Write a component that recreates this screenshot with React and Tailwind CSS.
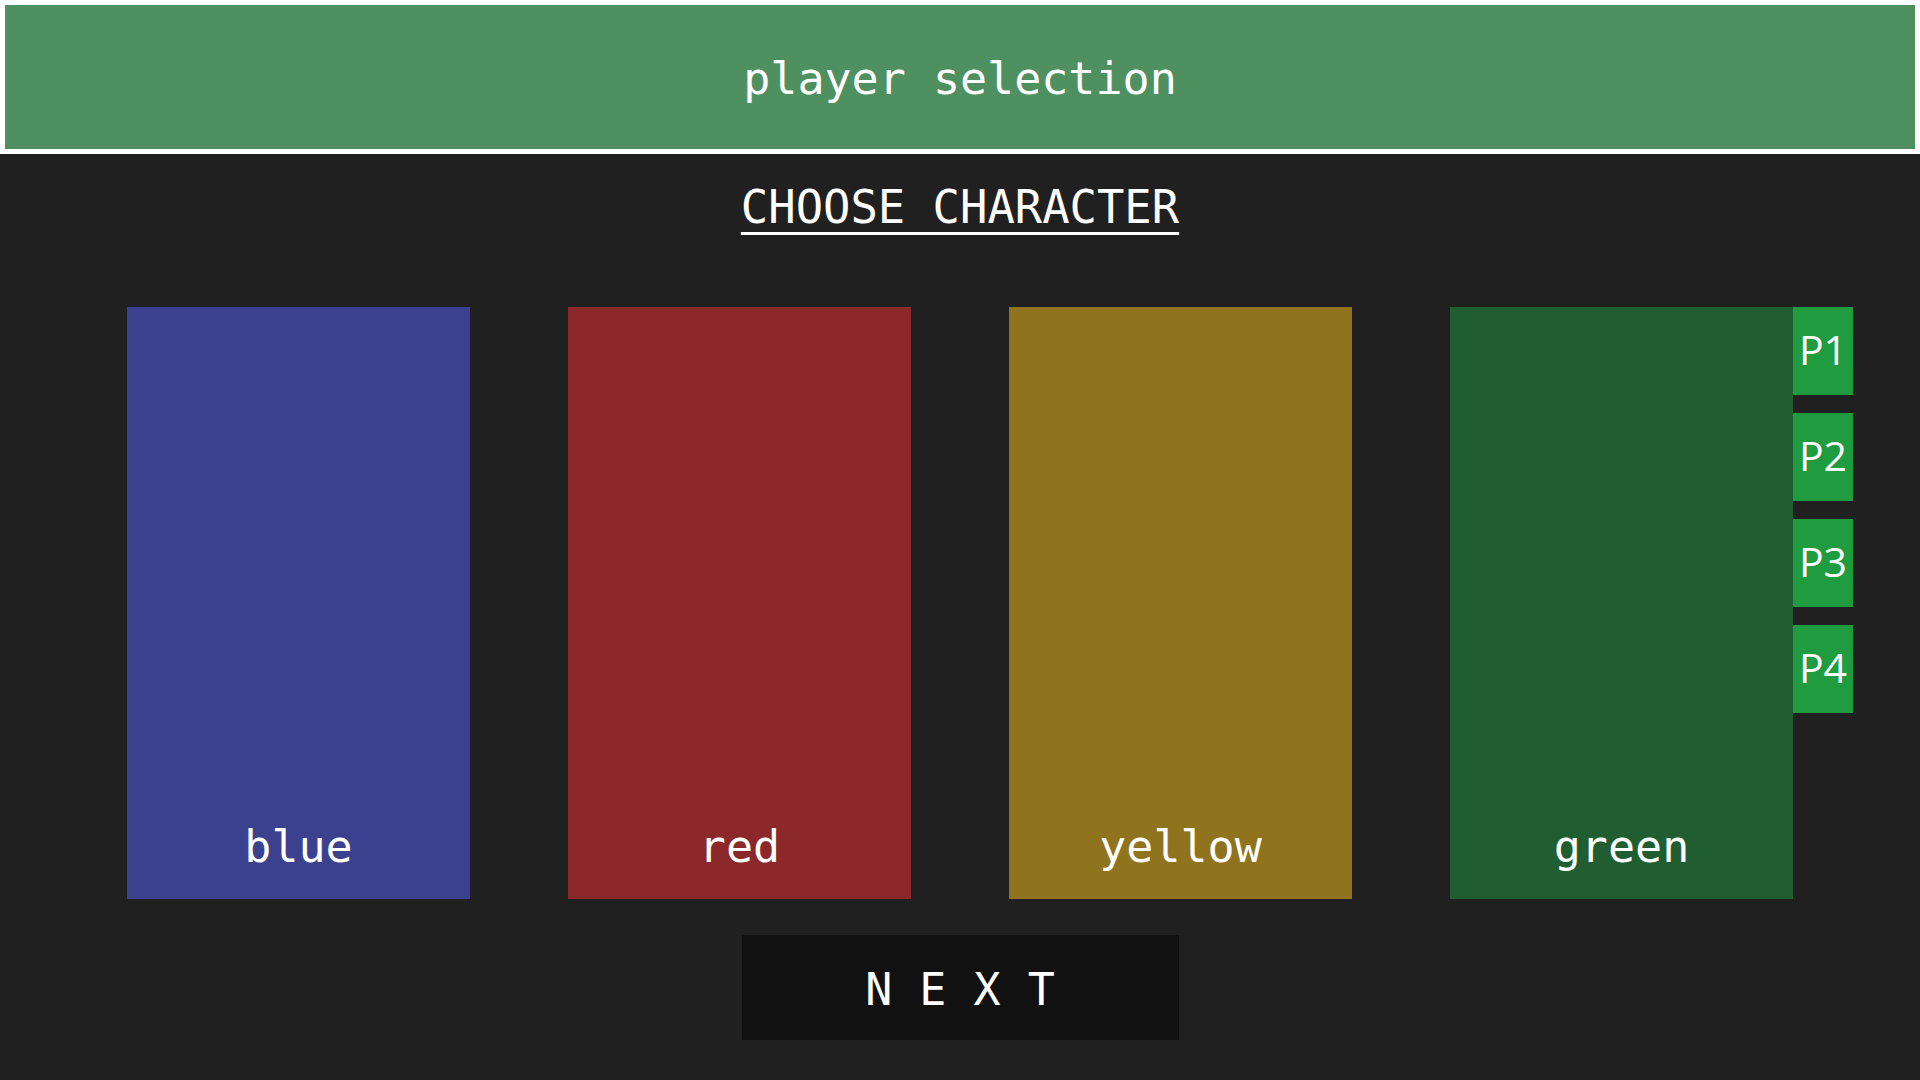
import { useState } from "react";

const characters = [
    { key: "blue", label: "blue", color: "bg-[#3b418f]" },
    { key: "red", label: "red", color: "bg-[#8b282a]" },
    { key: "yellow", label: "yellow", color: "bg-[#8f741d]" },
    { key: "green", label: "green", color: "bg-[#205e32]" },
];

const players = ["P1", "P2", "P3", "P4"];

function PlayerTags() {
    return (
        <div className="absolute left-full top-0 flex flex-col gap-[18px]">
            {players.map((p) => (
                <div
                    key={p}
                    className="w-[60px] h-[88px] bg-[#1f9c40] flex items-center justify-center pb-1 font-['Open_Sans',sans-serif] text-[41px] leading-none"
                >
                    {p}
                </div>
            ))}
        </div>
    );
}

function CharacterCard({ character, selected, onSelect }) {
    return (
        <div
            onClick={() => onSelect(character.key)}
            className={`relative w-[343px] h-[592px] flex items-end justify-center pb-[26px] cursor-pointer ${character.color}`}
        >
            <span className="text-[45px] leading-[52px]">
                {character.label}
            </span>
            {selected ? <PlayerTags /> : null}
        </div>
    );
}

export default function App() {
    const [selected, setSelected] = useState("green");

    return (
        <div className="min-h-screen bg-[#202020] text-white font-['DejaVu_Sans_Mono',monospace]">
            <header className="h-[154px] border-[5px] border-white bg-[#4e9060] flex items-center justify-center">
                <h1 className="pt-1 text-[45px] leading-[52px]">player selection</h1>
            </header>

            <h2 className="mt-[27px] text-center text-[45.5px] leading-[54px]">
                <span className="underline decoration-[3px] underline-offset-[9px]">
                    CHOOSE CHARACTER
                </span>
            </h2>

            <div className="mt-[72px] flex justify-center gap-[98px]">
                {characters.map((c) => (
                    <CharacterCard
                        key={c.key}
                        character={c}
                        selected={selected === c.key}
                        onSelect={setSelected}
                    />
                ))}
            </div>

            <div className="mt-[36px] flex justify-center">
                <button className="w-[437px] h-[105px] bg-[#111111] flex items-center justify-center pt-1 text-[45px] leading-[52px] whitespace-pre">
                    N E X T
                </button>
            </div>
        </div>
    );
}
